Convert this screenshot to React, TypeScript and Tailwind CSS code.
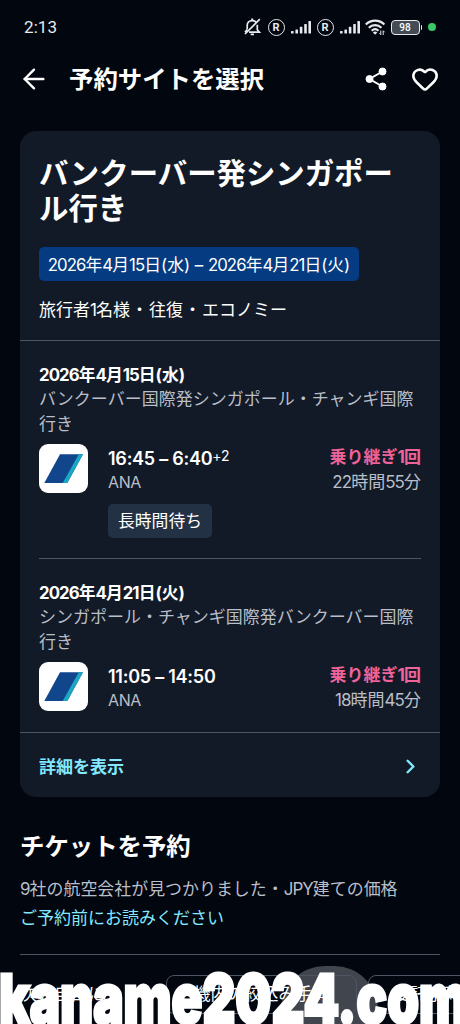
import React from 'react';
import { ArrowLeft, ChevronRight, Heart } from 'lucide-react';

interface Flight {
  date: string;
  route: string;
  time: string;
  plusDays?: string;
  airline: string;
  stops: string;
  duration: string;
  tag?: string;
}

const flights: Flight[] = [
  {
    date: '2026年4月15日(水)',
    route: 'バンクーバー国際発シンガポール・チャンギ国際行き',
    time: '16:45 – 6:40',
    plusDays: '+2',
    airline: 'ANA',
    stops: '乗り継ぎ1回',
    duration: '22時間55分',
    tag: '長時間待ち',
  },
  {
    date: '2026年4月21日(火)',
    route: 'シンガポール・チャンギ国際発バンクーバー国際行き',
    time: '11:05 – 14:50',
    airline: 'ANA',
    stops: '乗り継ぎ1回',
    duration: '18時間45分',
  },
];

// Latin letters and digits are set tighter than the Japanese around them
const Mixed: React.FC<{ text: string }> = ({ text }) => (
  <>
    {text.split(/([0-9A-Z]+)/).map((part, i) =>
      i % 2 ? <span key={i} className="tracking-[-0.055em]">{part}</span> : part
    )}
  </>
);

const Signal: React.FC = () => (
  <svg width="21" height="14" viewBox="0 0 21 14" fill="#e8eaed">
    <rect x="0" y="11" width="2.6" height="2.5" rx="0.6" />
    <rect x="4.4" y="9.5" width="2.6" height="4" rx="0.6" />
    <rect x="8.8" y="6.8" width="2.6" height="6.7" rx="0.6" />
    <rect x="13.2" y="4" width="2.6" height="9.5" rx="0.6" />
    <rect x="17.4" y="1" width="2.6" height="12.5" rx="0.6" />
  </svg>
);

const Registered: React.FC = () => (
  <div className="flex h-[17px] w-[17px] items-center justify-center rounded-full border-[1.5px] border-[#e8eaed] text-[11px] leading-none font-bold">R</div>
);

const StatusBar: React.FC = () => (
  <div className="flex h-[54px] items-center pr-6 pl-6 text-[#e8eaed] font-['Roboto',sans-serif]">
    <span className="flex-1 pt-[2px] text-[17px] tracking-[0.1px]">2:13</span>
    <svg className="relative left-px" width="17" height="18" viewBox="0 0 17 18" fill="none" stroke="#e8eaed" strokeWidth="1.7">
      <path d="M3.2 11.5V7.5C3.2 4.5 5.3 2.6 8.2 2.6c1.5 0 2.7.5 3.6 1.4M13.3 6.7v5l2 2.4H5M1 14.2l2-2.4M1 16 15.8 1.2" />
      <path d="M6.6 16.4h3.4M7.2 1.4h2" strokeWidth="1.8" />
    </svg>
    <div className="ml-[8px]"><Registered /></div>
    <div className="ml-[6px]"><Signal /></div>
    <div className="ml-[5px]"><Registered /></div>
    <div className="ml-[6px]"><Signal /></div>
    <svg className="ml-[4px]" width="21" height="17" viewBox="0 0 21 17" fill="none" stroke="#e8eaed" strokeWidth="2.2">
      <path d="M.8 5.5c5.3-5.1 13.4-5.1 18.6 0M3.8 8.7c3.6-3.5 9-3.5 12.6 0M6.7 11.8c2-1.9 4.8-1.9 6.8 0" />
      <path d="m10.1 15.8-2.2-2.3q2.2-2 4.4 0z" fill="#e8eaed" stroke="none" />
      <path d="M15.8 11.5v4.2l-1.3-1.4M18.2 16v-4.2l1.3 1.4" strokeWidth="1" />
    </svg>
    <div className="ml-[5px] flex h-[15px] w-[29px] items-center justify-center rounded-[4px] border-[1.5px] border-[#e8eaed] bg-[#454b54] pt-px text-[10px] leading-none font-medium text-white">98</div>
    <div className="ml-px h-[5px] w-[1.5px] rounded-r bg-[#e8eaed]" />
    <div className="ml-[6px] h-2 w-2 rounded-full bg-[#38c964]" />
  </div>
);

const AirlineLogo: React.FC = () => (
  <div className="h-[49px] w-[49px] shrink-0 rounded-[9px] bg-white">
    <svg width="49" height="49" viewBox="0 0 49 49">
      <path d="M21 10.3h23L28.3 39H5.3z" fill="#12468c" />
      <path d="M39.8 10.3H44L28.3 39H23.7z" fill="#18a8c5" />
    </svg>
  </div>
);

const FlightRow: React.FC<{ flight: Flight }> = ({ flight }) => (
  <div>
    <p className="text-[16.8px] leading-6 font-bold text-white"><Mixed text={flight.date} /></p>
    <p className="text-[17px] leading-[24.5px] text-[#b9bec8]">{flight.route}</p>
    <div className="mt-[8px] flex">
      <AirlineLogo />
      <div className="ml-[20px] flex-1">
        <p className="h-[27px] text-[18px] leading-[30px] font-semibold tracking-[-0.25px] text-white">
          {flight.time}
          {flight.plusDays && <span className="relative -top-[4px] text-[14px] leading-none font-normal">{flight.plusDays}</span>}
        </p>
        <p className="text-[16px] leading-[23px] tracking-[-0.4px] text-[#b9bec8]">{flight.airline}</p>
        {flight.tag && (
          <span className="mt-[10px] flex h-[34px] w-[104px] items-center justify-center rounded-[5px] bg-[#233144] pt-[2px] text-[16.8px] text-white">{flight.tag}</span>
        )}
      </div>
      <div className="text-right">
        <p className="h-[26px] text-[17px] leading-[27px] font-bold text-[#ef6399]"><Mixed text={flight.stops} /></p>
        <p className="text-[17px] leading-6 text-[#b9bec8]"><Mixed text={flight.duration} /></p>
      </div>
    </div>
  </div>
);

const App: React.FC = () => {
  return (
    <div className="relative h-[1024px] w-[460px] overflow-hidden bg-[#01060f] text-white font-['Inter','Noto_Sans_CJK_JP',sans-serif]">
      <StatusBar />
      <header className="flex h-[50px] items-center pr-[21px] pl-[18px]">
        <ArrowLeft size={32} strokeWidth={1.8} />
        <h1 className="ml-[19px] flex-1 text-[24.4px] leading-none font-bold">予約サイトを選択</h1>
        <svg width="22" height="24" viewBox="0 0 22 24" fill="white" stroke="white">
          <path d="M17.5 4.5 4.5 12l13 7.5" fill="none" strokeWidth="2" />
          <circle cx="17.5" cy="4.5" r="3.5" />
          <circle cx="4.5" cy="12" r="3.5" />
          <circle cx="17.5" cy="19.5" r="3.5" />
        </svg>
        <Heart className="ml-[24px]" size={28} strokeWidth={2.2} />
      </header>

      <main className="mt-[27px] px-5">
        <section className="h-[666px] rounded-2xl bg-[#121a27]">
          <div className="h-[210px] border-b border-[#4c5563] px-[19px] pt-[25px]">
            <h2 className="text-[29.4px] leading-[35px] font-bold">バンクーバー発シンガポール行き</h2>
            <div className="mt-[21px] flex h-[34px] w-[320px] items-center justify-center rounded-[5px] bg-[#053b80] pt-[3px] text-[16.8px] whitespace-pre">
              <Mixed text="2026年4月15日(水) – 2026年4月21日(火)" />
            </div>
            <p className="mt-[17px] text-[17px] leading-6">
              <Mixed text="旅行者1名様" /><span className="mx-px">・</span>往復<span className="mx-px">・</span>エコノミー
            </p>
          </div>
          <div className="flex h-[392px] flex-col border-b border-[#4c5563] px-[19px] pt-[22px]">
            <FlightRow flight={flights[0]} />
            <div className="mt-[20px] mb-[22px] h-px shrink-0 bg-[#4c5563]" />
            <FlightRow flight={flights[1]} />
          </div>
          <a className="flex h-[64px] items-center justify-between pt-[2px] pr-[18px] pl-[19px] text-[#84e9ff]">
            <span className="pt-[3px] text-[17px] font-bold">詳細を表示</span>
            <ChevronRight size={23} strokeWidth={2.5} />
          </a>
        </section>

        <section className="mt-[33px] border-b border-[#4c5563] pb-[24px]">
          <h2 className="text-[24.4px] leading-8 font-bold">チケットを予約</h2>
          <p className="mt-[15px] text-[16.95px] leading-6 text-[#b9bec8]">
            <Mixed text="9社の航空会社が見つかりました・JPY建ての価格" />
          </p>
          <a className="mt-[5px] block text-[17px] leading-6 text-[#84e9ff]">ご予約前にお読みください</a>
        </section>
      </main>

      <div className="absolute top-[966px] left-[281px] h-[92px] w-[97px] rounded-[44px] bg-[#40454e]" />

      <div className="relative mt-[20px] flex gap-[11px] pl-5 text-[17px]">
        <div className="flex h-[39px] w-[135px] shrink-0 items-center whitespace-nowrap">次を自由にもり</div>
        <div className="flex h-[39px] w-[191px] shrink-0 items-center justify-center rounded-lg border border-[#4c5563]">機内の絞込み手荷</div>
        <div className="flex h-[39px] w-[140px] shrink-0 items-center rounded-lg border border-[#4c5563] pl-6">委託手荷物</div>
      </div>

      <div className="absolute top-[963px] -left-px origin-left scale-x-[0.748] text-[68px] leading-[71px] font-black whitespace-nowrap font-['Inter',sans-serif] [-webkit-text-stroke:3px_white]">kaname2024.com</div>
    </div>
  );
};

export default App;
